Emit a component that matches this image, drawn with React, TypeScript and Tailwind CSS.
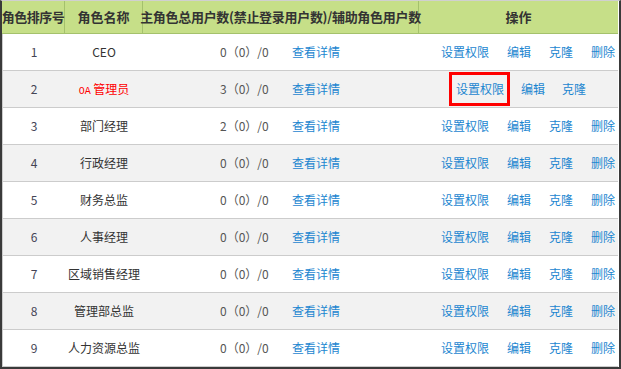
const roles = [
  { id: 1, name: "CEO", count: "0（0）/0" },
  { id: 2, name: "管理员", count: "3（0）/0", oa: true },
  { id: 3, name: "部门经理", count: "2（0）/0" },
  { id: 4, name: "行政经理", count: "0（0）/0" },
  { id: 5, name: "财务总监", count: "0（0）/0" },
  { id: 6, name: "人事经理", count: "0（0）/0" },
  { id: 7, name: "区域销售经理", count: "0（0）/0" },
  { id: 8, name: "管理部总监", count: "0（0）/0" },
  { id: 9, name: "人力资源总监", count: "0（0）/0" },
];

const font = { fontFamily: '"Noto Sans CJK SC", "Liberation Sans", sans-serif' };

function Link({ children }: { children: React.ReactNode }) {
  return <a className="cursor-pointer text-[12px] text-[#1c86d0]">{children}</a>;
}

function Row({ role, alt }: { role: (typeof roles)[number]; alt: boolean }) {
  return (
    <div
      className={`flex h-[37px] items-center border-b border-l border-[#cccccc] text-[12px] text-[#333] ${
        alt ? "bg-[#f2f2f2]" : "bg-white"
      }`}
    >
      <div className="w-[62px] text-center text-[#445]">{role.id}</div>
      <div className="w-[78px] text-center">
        {role.oa ? (
          <span className="text-[#ff0000]">
            <span className="font-['Liberation_Mono'] text-[10px]">OA</span> {role.name}
          </span>
        ) : (
          role.name
        )}
      </div>
      <div className="w-[149px] pl-[77px] text-[#555]">{role.count}</div>
      <div className="w-[127px]">
        <Link>查看详情</Link>
      </div>
      {role.oa ? (
        <div className="flex w-[198px] items-center pl-[30px]">
          <div className="flex h-[34px] items-center border-[3px] border-[#ff0000] pl-[4px] pr-[3px]">
            <Link>设置权限</Link>
          </div>
          <div className="ml-[11px]">
            <Link>编辑</Link>
          </div>
          <div className="ml-[17px]">
            <Link>克隆</Link>
          </div>
        </div>
      ) : (
        <div className="flex w-[198px] items-center gap-[18px] pl-[22px]">
          <Link>设置权限</Link>
          <Link>编辑</Link>
          <Link>克隆</Link>
          <Link>删除</Link>
        </div>
      )}
    </div>
  );
}

export default function App() {
  return (
    <div
      style={font}
      className="h-[369px] w-[621px] overflow-hidden border-b-2 border-l-2 border-r-2 border-t border-b-[#3a3a3a] border-l-[#3a3a3a] border-r-[#3a3a3a] border-t-[#d0d0d0] bg-white"
    >
      <div className="w-[616px]">
        <div className="flex h-[33px] border-b border-[#a4c16c] bg-[#c6df88] text-[13px] font-bold text-[#333]">
          <div className="flex w-[63px] items-center justify-center whitespace-nowrap border-r border-[#a4c16c] tracking-[-0.5px]">
            角色排序号
          </div>
          <div className="flex w-[78px] items-center justify-center border-r border-[#a4c16c]">
            角色名称
          </div>
          <div className="flex w-[276px] items-center justify-center whitespace-nowrap border-r border-[#a4c16c] tracking-[-0.3px]">
            主角色总用户数(禁止登录用户数)/辅助角色用户数
          </div>
          <div className="flex flex-1 items-center justify-center">操作</div>
        </div>
        {roles.map((r, i) => (
          <Row key={r.id} role={r} alt={i % 2 === 1} />
        ))}
      </div>
    </div>
  );
}
